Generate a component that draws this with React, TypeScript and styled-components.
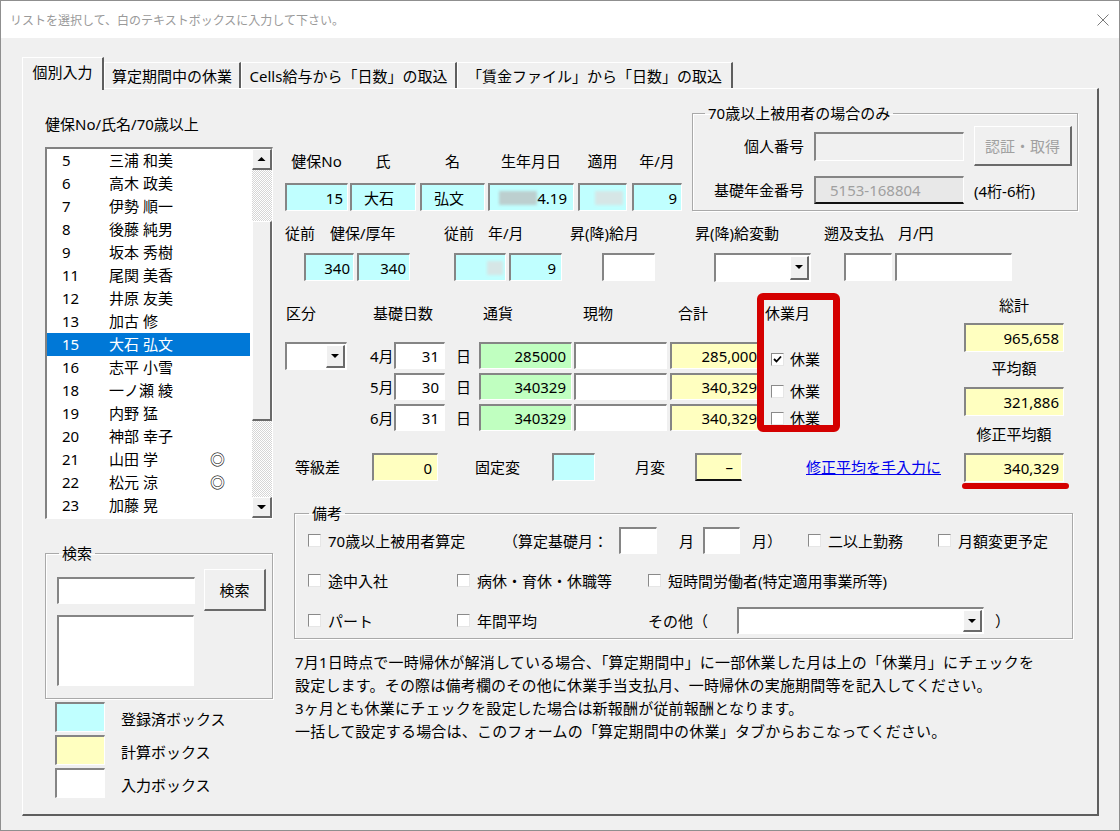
import React from "react";
import styled, { createGlobalStyle, css } from "styled-components";

const GlobalStyle = createGlobalStyle`
  *, *::before, *::after { box-sizing: border-box; }
  html, body { margin: 0; padding: 0; background: #f0f0f0; }
  body {
    font-family: "Noto Sans", "Noto Sans CJK JP", sans-serif;
    font-size: 15px;
    color: #000;
  }
`;

const COL = {
  cyan: "#c0ffff",
  yellow: "#ffffc0",
  green: "#c0ffc0",
  white: "#ffffff",
  face: "#f0f0f0",
  dim: "#e8e8e8",
};

const raised = css`
  background: #f0f0f0;
  border-style: solid;
  border-width: 1px 2px 2px 1px;
  border-color: #ffffff #6a6a6a #6a6a6a #ffffff;
`;

/* ---------- window frame ---------- */
const Window = styled.div`
  width: 1120px;
  height: 831px;
  border: 1px solid #8f8f8f;
  background: #f0f0f0;
  display: flex;
  flex-direction: column;
  overflow: hidden;
`;

const TitleBar = styled.div`
  flex: none;
  height: 37px;
  background: #fff;
  display: flex;
  align-items: center;
  justify-content: space-between;
  padding: 0 10px 0 9px;
  font-family: "Noto Sans CJK JP", sans-serif;
  font-size: 12px;
  color: #9a9a9a;
`;

const Body = styled.div`
  flex: 1;
  padding: 19px 0 0 21px;
  display: flex;
  flex-direction: column;
`;

const TabStrip = styled.div`
  display: flex;
  align-items: flex-end;
  height: 31px;
  position: relative;
  z-index: 1;
`;

const Tab = styled.div<{ $active?: boolean; $w: number }>`
  flex: none;
  width: ${(p) => p.$w}px;
  height: ${(p) => (p.$active ? 33 : 26)}px;
  margin-bottom: ${(p) => (p.$active ? -2 : 0)}px;
  padding-bottom: ${(p) => (p.$active ? 5 : 0)}px;
  background: #f0f0f0;
  border-style: solid;
  border-width: 1px 2px 0 1px;
  border-color: #ffffff #5e5e5e transparent #ffffff;
  display: flex;
  align-items: center;
  justify-content: center;
  line-height: 20px;
  white-space: nowrap;
`;

const Panel = styled.div`
  width: 1077px;
  height: 728px;
  border-style: solid;
  border-width: 1px 2px 2px 1px;
  border-color: #ffffff #5e5e5e #5e5e5e #ffffff;
  display: grid;
  grid-template-columns: 228px 812px;
  column-gap: 12px;
  padding-left: 22px;
  align-items: start;
`;

/* ---------- common controls ---------- */
type BoxProps = {
  $w: number;
  $h?: number;
  $bg?: string;
  $align?: "left" | "right" | "center";
  $pl?: number;
  $pr?: number;
  $dark?: boolean;
  $ml?: number;
  $mr?: number;
  $color?: string;
};

const Box = styled.div<BoxProps>`
  flex: none;
  position: relative;
  width: ${(p) => p.$w}px;
  height: ${(p) => p.$h ?? 28}px;
  margin-left: ${(p) => p.$ml ?? 0}px;
  margin-right: ${(p) => p.$mr ?? 0}px;
  background: ${(p) => p.$bg ?? COL.white};
  color: ${(p) => p.$color ?? "#000"};
  border-style: solid;
  border-width: 2px 1px ${(p) => (p.$dark ? 2 : 1)}px 2px;
  border-color: #858585 #ffffff ${(p) => (p.$dark ? "#111" : "#ffffff")} #858585;
  display: flex;
  align-items: center;
  justify-content: ${(p) =>
    p.$align === "right" ? "flex-end" : p.$align === "center" ? "center" : "flex-start"};
  padding-left: ${(p) => p.$pl ?? 4}px;
  padding-right: ${(p) => p.$pr ?? 4}px;
  line-height: 20px;
  white-space: nowrap;
  overflow: hidden;
`;

const Redact = styled.span<{ $w: number; $light?: boolean }>`
  display: inline-block;
  flex: none;
  width: ${(p) => p.$w}px;
  height: 14px;
  background: ${(p) => (p.$light ? "#d6e6e6" : "#bccfcf")};
  filter: blur(1.5px);
`;

const Combo = styled(Box)`
  justify-content: flex-end;
  padding: 1px;
`;

const DropBtn = styled.span`
  ${raised};
  width: 19px;
  height: 100%;
  display: flex;
  align-items: center;
  justify-content: center;
`;

const Button = styled.div<{ $w: number; $h: number; $disabled?: boolean }>`
  ${raised};
  width: ${(p) => p.$w}px;
  height: ${(p) => p.$h}px;
  display: flex;
  align-items: center;
  justify-content: center;
  color: ${(p) => (p.$disabled ? "#a0a0a0" : "#000")};
  line-height: 20px;
`;

const GroupBox = styled.fieldset<{ $w: number; $h: number; $ml?: number; $mt?: number }>`
  flex: none;
  margin: ${(p) => p.$mt ?? 0}px 0 0 ${(p) => p.$ml ?? 0}px;
  padding: 0;
  min-width: 0;
  width: ${(p) => p.$w}px;
  height: ${(p) => p.$h}px;
  border: 1px solid #a9a9a9;
  box-shadow: inset 1px 1px 0 #ffffff, 1px 1px 0 #ffffff;
`;

const GroupLegend = styled.legend<{ $ml: number }>`
  margin-left: ${(p) => p.$ml}px;
  padding: 0 3px;
  line-height: 20px;
`;

const CheckBox = styled.span`
  flex: none;
  width: 13px;
  height: 13px;
  display: inline-flex;
  align-items: center;
  justify-content: center;
  background: #fff;
  border-style: solid;
  border-width: 1px;
  border-color: #8a8a8a #e6e6e6 #e6e6e6 #8a8a8a;
`;

const CheckItem = styled.span`
  display: inline-flex;
  align-items: center;
  gap: 7px;
  white-space: nowrap;
`;

const Slot = styled.div<{ $w?: number; $pl?: number }>`
  flex: none;
  ${(p) => (p.$w ? `width: ${p.$w}px;` : "")}
  padding-left: ${(p) => p.$pl ?? 0}px;
  display: flex;
  align-items: center;
  white-space: nowrap;
  height: 100%;
`;

const Tri = ({ up, w = 8 }: { up?: boolean; w?: number }) => (
  <svg width={w} height={w / 2} viewBox={`0 0 ${w} ${w / 2}`}>
    <path d={up ? `M0 ${w / 2}H${w}L${w / 2} 0Z` : `M0 0H${w}L${w / 2} ${w / 2}Z`} fill="#000" />
  </svg>
);

const Check = ({ on }: { on?: boolean }) => (
  <CheckBox>
    {on && (
      <svg width="9" height="8" viewBox="0 0 9 8">
        <path d="M1 4 L3.5 6.5 L8 1.5" stroke="#000" strokeWidth="1.8" fill="none" />
      </svg>
    )}
  </CheckBox>
);

/* ---------- left column ---------- */
const LeftCol = styled.div`
  display: flex;
  flex-direction: column;
`;

const ListTitle = styled.div`
  margin-top: 25px;
  line-height: 20px;
  white-space: nowrap;
`;

const ListBox = styled.div`
  margin-top: 13px;
  height: 372px;
  display: flex;
  background: #fff;
  border-style: solid;
  border-width: 2px 1px 1px 2px;
  border-color: #828282 #ffffff #ffffff #828282;
`;

const ListRows = styled.div`
  flex: 1;
  display: flex;
  flex-direction: column;
  overflow: hidden;
  padding-right: 2px;
`;

const ListRow = styled.div<{ $sel?: boolean }>`
  flex: none;
  height: 23px;
  display: flex;
  align-items: center;
  line-height: 23px;
  background: ${(p) => (p.$sel ? "#0078d7" : "transparent")};
  color: ${(p) => (p.$sel ? "#fff" : "#000")};
  white-space: nowrap;
`;

const NumCell = styled.span`
  width: 62px;
  padding-left: 15px;
`;

const NameCell = styled.span`
  width: 101px;
`;

const ScrollBar = styled.div`
  width: 20px;
  flex: none;
  display: flex;
  flex-direction: column;
`;

const ScrollBtn = styled.div`
  ${raised};
  height: 21px;
  flex: none;
  display: flex;
  align-items: center;
  justify-content: center;
`;

const Track = styled.div<{ $h?: number }>`
  ${(p) => (p.$h ? `height: ${p.$h}px; flex: none;` : "flex: 1;")}
  background-color: #fff;
  background-image: repeating-conic-gradient(#d6d6d6 0% 25%, #ffffff 0% 50%);
  background-size: 2px 2px;
`;

const Thumb = styled.div`
  ${raised};
  height: 200px;
  flex: none;
`;

const SearchGrid = styled.div`
  padding: 6px 0 0 11px;
  display: grid;
  grid-template-columns: 138px 62px;
  grid-template-rows: 42px 71px;
  column-gap: 9px;
  row-gap: 4px;
  align-items: center;
`;

const LegendList = styled.div`
  margin: 3px 0 0 10px;
  display: flex;
  flex-direction: column;
  gap: 3px;
`;

const LegendRow = styled.div`
  display: flex;
  align-items: center;
  gap: 16px;
  line-height: 20px;
`;

const LegendText = styled.span`
  padding-top: 4px;
`;

/* ---------- right column ---------- */
const RightCol = styled.div`
  display: flex;
  flex-direction: column;
  padding-top: 14px;
`;

const TopSection = styled.div`
  display: flex;
  align-items: flex-start;
`;

const PersonFields = styled.div`
  flex: none;
  margin-top: 48px;
  display: flex;
`;

const FieldCol = styled.div<{ $mr: number }>`
  flex: none;
  margin-right: ${(p) => p.$mr}px;
  display: flex;
  flex-direction: column;
  align-items: center;
  gap: 12px;
`;

const ColLabel = styled.div`
  line-height: 20px;
  white-space: nowrap;
`;

const SeniorGrid = styled.div`
  padding-top: 3px;
  display: grid;
  grid-template-columns: 111px 150px 98px;
  grid-template-rows: 40px 28px;
  column-gap: 10px;
  row-gap: 10px;
  align-items: center;
`;

const RightLabel = styled.div`
  text-align: right;
  line-height: 20px;
  white-space: nowrap;
`;

const Row = styled.div<{ $mt: number; $h?: number }>`
  flex: none;
  margin-top: ${(p) => p.$mt}px;
  height: ${(p) => p.$h ?? 20}px;
  display: flex;
  align-items: center;
  line-height: 20px;
`;

const Section3 = styled.div`
  margin-top: 14px;
  display: flex;
  align-items: flex-start;
`;

const MainTable = styled.div`
  flex: none;
  width: 679px;
  padding-top: 8px;
  display: flex;
  flex-direction: column;
`;

const TableTop = styled.div`
  display: flex;
  align-items: flex-start;
`;

const DataGrid = styled.div`
  flex: none;
  display: grid;
  grid-template-columns: 62px 23px 24px 51px 34px 93px 95px 96px;
  grid-template-rows: 35px 27px 27px 27px;
  row-gap: 4px;
  line-height: 20px;
`;

const GCell = styled.div<{ $col: string; $row: number; $pl?: number }>`
  grid-column: ${(p) => p.$col};
  grid-row: ${(p) => p.$row};
  padding-left: ${(p) => p.$pl ?? 0}px;
  display: flex;
  align-items: ${(p) => (p.$row === 1 ? "flex-start" : "center")};
  white-space: nowrap;
`;

const KyugyoCol = styled.div`
  flex: none;
  position: relative;
  width: 75px;
  margin-left: 2px;
  display: flex;
  flex-direction: column;
  line-height: 20px;
`;

const KyugyoRow = styled.div<{ $mt: number }>`
  margin-top: ${(p) => p.$mt}px;
  padding-left: 6px;
  height: 20px;
  display: flex;
  align-items: center;
  gap: 6px;
`;

const RedFrame = styled.div`
  position: absolute;
  left: -8px;
  top: -10px;
  width: 83px;
  height: 139px;
  border: 7px solid #d40000;
  border-radius: 6px;
  pointer-events: none;
`;

const RedUnderline = styled.div`
  position: absolute;
  left: -4px;
  right: -6px;
  top: calc(100% + 2px);
  height: 6px;
  background: #d40000;
  border-radius: 3px;
`;

const TotalsCol = styled.div`
  flex: none;
  width: 100px;
  display: flex;
  flex-direction: column;
  align-items: center;
`;

const TotalLabel = styled.div<{ $mt?: number }>`
  margin-top: ${(p) => p.$mt ?? 0}px;
  line-height: 20px;
  white-space: nowrap;
`;

const TotalBox = styled(Box)<{ $mt: number }>`
  overflow: visible;
  margin-top: ${(p) => p.$mt}px;
`;

const Link = styled.a`
  color: #0000ee;
  text-decoration: underline;
  white-space: nowrap;
  cursor: pointer;
`;

const RemarksBody = styled.div`
  padding: 4px 0 0 13px;
  display: flex;
  flex-direction: column;
  gap: 13px;
`;

const RemarkRow = styled.div`
  height: 27px;
  display: flex;
  align-items: center;
  line-height: 20px;
`;

const Notes = styled.div`
  margin: 12px 0 0 10px;
  line-height: 23px;
  white-space: nowrap;
  letter-spacing: 0.2px;
`;

const listItems: [string, string, string][] = [
  ["5", "三浦 和美", ""],
  ["6", "高木 政美", ""],
  ["7", "伊勢 順一", ""],
  ["8", "後藤 純男", ""],
  ["9", "坂本 秀樹", ""],
  ["11", "尾関 美香", ""],
  ["12", "井原 友美", ""],
  ["13", "加古 修", ""],
  ["15", "大石 弘文", ""],
  ["16", "志平 小雪", ""],
  ["18", "一ノ瀬 綾", ""],
  ["19", "内野 猛", ""],
  ["20", "神部 幸子", ""],
  ["21", "山田 学", "◎"],
  ["22", "松元 涼", "◎"],
  ["23", "加藤 晃", ""],
];

const months = [
  { m: "4月", d: "31", cash: "285000", total: "285,000", on: true, mt: 26 },
  { m: "5月", d: "30", cash: "340329", total: "340,329", on: false, mt: 12 },
  { m: "6月", d: "31", cash: "340329", total: "340,329", on: false, mt: 7 },
];

export default function App() {
  return (
    <>
      <GlobalStyle />
      <Window>
        <TitleBar>
          <span>リストを選択して、白のテキストボックスに入力して下さい。</span>
          <svg width="12" height="12" viewBox="0 0 12 12">
            <path d="M0.5 0.5L11.5 11.5M11.5 0.5L0.5 11.5" stroke="#7a7a7a" strokeWidth="1" />
          </svg>
        </TitleBar>
        <Body>
          <TabStrip>
            <Tab $active $w={82}>個別入力</Tab>
            <Tab $w={137}>算定期間中の休業</Tab>
            <Tab $w={216}>Cells給与から「日数」の取込</Tab>
            <Tab $w={276}>「賃金ファイル」から「日数」の取込</Tab>
          </TabStrip>
          <Panel>
            <LeftCol>
              <ListTitle>健保No/氏名/70歳以上</ListTitle>
              <ListBox>
                <ListRows>
                  {listItems.map(([n, name, mark], i) => (
                    <ListRow key={n} $sel={i === 8}>
                      <NumCell>{n}</NumCell>
                      <NameCell>{name}</NameCell>
                      <span>{mark}</span>
                    </ListRow>
                  ))}
                </ListRows>
                <ScrollBar>
                  <ScrollBtn>
                    <Tri up w={9} />
                  </ScrollBtn>
                  <Track $h={51} />
                  <Thumb />
                  <Track />
                  <ScrollBtn>
                    <Tri w={9} />
                  </ScrollBtn>
                </ScrollBar>
              </ListBox>
              <GroupBox $w={228} $h={156} $mt={24}>
                <GroupLegend $ml={13}>検索</GroupLegend>
                <SearchGrid>
                  <Box $w={138} $h={27} />
                  <Button $w={62} $h={42}>検索</Button>
                  <Box $w={137} $h={71} />
                </SearchGrid>
              </GroupBox>
              <LegendList>
                <LegendRow>
                  <Box $w={50} $h={30} $bg={COL.cyan} />
                  <LegendText>登録済ボックス</LegendText>
                </LegendRow>
                <LegendRow>
                  <Box $w={50} $h={30} $bg={COL.yellow} />
                  <LegendText>計算ボックス</LegendText>
                </LegendRow>
                <LegendRow>
                  <Box $w={50} $h={30} $bg={COL.white} />
                  <LegendText>入力ボックス</LegendText>
                </LegendRow>
              </LegendList>
            </LeftCol>

            <RightCol>
              <TopSection>
                <PersonFields>
                  <FieldCol $mr={2}>
                    <ColLabel>健保No</ColLabel>
                    <Box $w={63} $bg={COL.cyan} $align="right" $pr={4}>15</Box>
                  </FieldCol>
                  <FieldCol $mr={4}>
                    <ColLabel>氏</ColLabel>
                    <Box $w={66} $bg={COL.cyan} $pl={12}>大石</Box>
                  </FieldCol>
                  <FieldCol $mr={3}>
                    <ColLabel>名</ColLabel>
                    <Box $w={65} $bg={COL.cyan} $pl={12}>弘文</Box>
                  </FieldCol>
                  <FieldCol $mr={4}>
                    <ColLabel>生年月日</ColLabel>
                    <Box $w={86} $bg={COL.cyan} $align="right" $pr={6}>
                      <Redact $w={38} />
                      <span>4.19</span>
                    </Box>
                  </FieldCol>
                  <FieldCol $mr={5}>
                    <ColLabel>適用</ColLabel>
                    <Box $w={49} $bg={COL.cyan} $align="right" $pr={3}>
                      <Redact $w={28} $light />
                    </Box>
                  </FieldCol>
                  <FieldCol $mr={0}>
                    <ColLabel>年/月</ColLabel>
                    <Box $w={50} $bg={COL.cyan} $align="right" $pr={4}>9</Box>
                  </FieldCol>
                </PersonFields>

                <GroupBox $w={386} $h={108} $ml={10}>
                  <GroupLegend $ml={12}>70歳以上被用者の場合のみ</GroupLegend>
                  <SeniorGrid>
                    <RightLabel>個人番号</RightLabel>
                    <Box $w={150} $h={29} $bg={COL.face} />
                    <Button $w={98} $h={40} $disabled>認証・取得</Button>
                    <RightLabel>基礎年金番号</RightLabel>
                    <Box $w={150} $h={28} $bg={COL.dim} $dark $pl={14} $color="#a0a0a0">
                      5153-168804
                    </Box>
                    <span>(4桁-6桁)</span>
                  </SeniorGrid>
                </GroupBox>
              </TopSection>

              <Row $mt={12}>
                <Slot $w={45}>従前</Slot>
                <Slot $w={114}>健保/厚年</Slot>
                <Slot $w={44}>従前</Slot>
                <Slot $w={82}>年/月</Slot>
                <Slot $w={125}>昇(降)給月</Slot>
                <Slot $w={129}>昇(降)給変動</Slot>
                <Slot $w={74}>遡及支払</Slot>
                <Slot>月/円</Slot>
              </Row>
              <Row $mt={10} $h={28}>
                <Box $w={50} $ml={19} $mr={3} $bg={COL.cyan} $align="right" $pr={3}>340</Box>
                <Box $w={53} $mr={44} $bg={COL.cyan} $align="right" $pr={3}>340</Box>
                <Box $w={52} $mr={3} $bg={COL.cyan} $align="right" $pr={2}>
                  <Redact $w={16} $light />
                </Box>
                <Box $w={53} $mr={40} $bg={COL.cyan} $align="right" $pr={5}>9</Box>
                <Box $w={53} $mr={59} />
                <Combo $w={97} $h={29} $mr={33}>
                  <DropBtn>
                    <Tri w={8} />
                  </DropBtn>
                </Combo>
                <Box $w={48} $mr={3} />
                <Box $w={117} />
              </Row>

              <Section3>
                <MainTable>
                  <TableTop>
                    <DataGrid>
                      <GCell $col="1" $row={1} $pl={1}>区分</GCell>
                      <GCell $col="3 / span 3" $row={1} $pl={3}>基礎日数</GCell>
                      <GCell $col="6" $row={1} $pl={4}>通貨</GCell>
                      <GCell $col="7" $row={1} $pl={11}>現物</GCell>
                      <GCell $col="8" $row={1} $pl={11}>合計</GCell>
                      <GCell $col="1" $row={2}>
                        <Combo $w={62} $h={28}>
                          <DropBtn>
                            <Tri w={8} />
                          </DropBtn>
                        </Combo>
                      </GCell>
                      {months.map((r, i) => (
                        <React.Fragment key={r.m}>
                          <GCell $col="3" $row={i + 2}>{r.m}</GCell>
                          <GCell $col="4" $row={i + 2}>
                            <Box $w={51} $h={27} $align="right" $pr={5}>{r.d}</Box>
                          </GCell>
                          <GCell $col="5" $row={i + 2} $pl={11}>日</GCell>
                          <GCell $col="6" $row={i + 2}>
                            <Box $w={93} $h={27} $bg={COL.green} $align="right" $pr={5}>{r.cash}</Box>
                          </GCell>
                          <GCell $col="7" $row={i + 2}>
                            <Box $w={93} $h={27} $ml={2} />
                          </GCell>
                          <GCell $col="8" $row={i + 2}>
                            <Box $w={93} $h={27} $ml={3} $bg={COL.yellow} $align="right" $pr={5}>
                              {r.total}
                            </Box>
                          </GCell>
                        </React.Fragment>
                      ))}
                    </DataGrid>
                    <KyugyoCol>
                      <span>休業月</span>
                      {months.map((r) => (
                        <KyugyoRow key={r.m} $mt={r.mt}>
                          <Check on={r.on} />
                          <span>休業</span>
                        </KyugyoRow>
                      ))}
                      <RedFrame />
                    </KyugyoCol>
                  </TableTop>
                  <Row $mt={22} $h={28}>
                    <Slot $w={87} $pl={10}>等級差</Slot>
                    <Box $w={66} $bg={COL.yellow} $align="right" $pr={5}>0</Box>
                    <Slot $w={114} $pl={37}>固定変</Slot>
                    <Box $w={43} $bg={COL.cyan} />
                    <Slot $w={100} $pl={40}>月変</Slot>
                    <Box $w={47} $bg={COL.yellow} $dark $align="right" $pr={8}>–</Box>
                    <Slot $pl={64}>
                      <Link>修正平均を手入力に</Link>
                    </Slot>
                  </Row>
                </MainTable>

                <TotalsCol>
                  <TotalLabel>総計</TotalLabel>
                  <TotalBox $w={100} $h={29} $mt={8} $bg={COL.yellow} $align="right" $pr={4}>
                    965,658
                  </TotalBox>
                  <TotalLabel $mt={6}>平均額</TotalLabel>
                  <TotalBox $w={100} $h={29} $mt={9} $bg={COL.yellow} $align="right" $pr={4}>
                    321,886
                  </TotalBox>
                  <TotalLabel $mt={8}>修正平均額</TotalLabel>
                  <TotalBox $w={100} $h={29} $mt={9} $bg={COL.yellow} $align="right" $pr={4}>
                    340,329
                    <RedUnderline />
                  </TotalBox>
                </TotalsCol>
              </Section3>

              <GroupBox $w={779} $h={136} $ml={9} $mt={21}>
                <GroupLegend $ml={14}>備考</GroupLegend>
                <RemarksBody>
                  <RemarkRow>
                    <Slot $w={195}>
                      <CheckItem>
                        <Check />
                        70歳以上被用者算定
                      </CheckItem>
                    </Slot>
                    <Slot $w={116}>（算定基礎月：</Slot>
                    <Slot $w={60}>
                      <Box $w={38} $h={27} />
                    </Slot>
                    <Slot $w={24}>月</Slot>
                    <Slot $w={49}>
                      <Box $w={37} $h={27} />
                    </Slot>
                    <Slot $w={56}>月）</Slot>
                    <Slot $w={130}>
                      <CheckItem>
                        <Check />
                        二以上勤務
                      </CheckItem>
                    </Slot>
                    <Slot>
                      <CheckItem>
                        <Check />
                        月額変更予定
                      </CheckItem>
                    </Slot>
                  </RemarkRow>
                  <RemarkRow>
                    <Slot $w={149}>
                      <CheckItem>
                        <Check />
                        途中入社
                      </CheckItem>
                    </Slot>
                    <Slot $w={191}>
                      <CheckItem>
                        <Check />
                        病休・育休・休職等
                      </CheckItem>
                    </Slot>
                    <Slot>
                      <CheckItem>
                        <Check />
                        短時間労働者(特定適用事業所等)
                      </CheckItem>
                    </Slot>
                  </RemarkRow>
                  <RemarkRow>
                    <Slot $w={149}>
                      <CheckItem>
                        <Check />
                        パート
                      </CheckItem>
                    </Slot>
                    <Slot $w={191}>
                      <CheckItem>
                        <Check />
                        年間平均
                      </CheckItem>
                    </Slot>
                    <Slot $w={89}>その他（</Slot>
                    <Combo $w={247} $h={27}>
                      <DropBtn>
                        <Tri w={8} />
                      </DropBtn>
                    </Combo>
                    <Slot $pl={11}>）</Slot>
                  </RemarkRow>
                </RemarksBody>
              </GroupBox>

              <Notes>
                <div>7月1日時点で一時帰休が解消している場合、「算定期間中」に一部休業した月は上の「休業月」にチェックを</div>
                <div>設定します。その際は備考欄のその他に休業手当支払月、一時帰休の実施期間等を記入してください。</div>
                <div>3ヶ月とも休業にチェックを設定した場合は新報酬が従前報酬となります。</div>
                <div>一括して設定する場合は、このフォームの「算定期間中の休業」タブからおこなってください。</div>
              </Notes>
            </RightCol>
          </Panel>
        </Body>
      </Window>
    </>
  );
}
